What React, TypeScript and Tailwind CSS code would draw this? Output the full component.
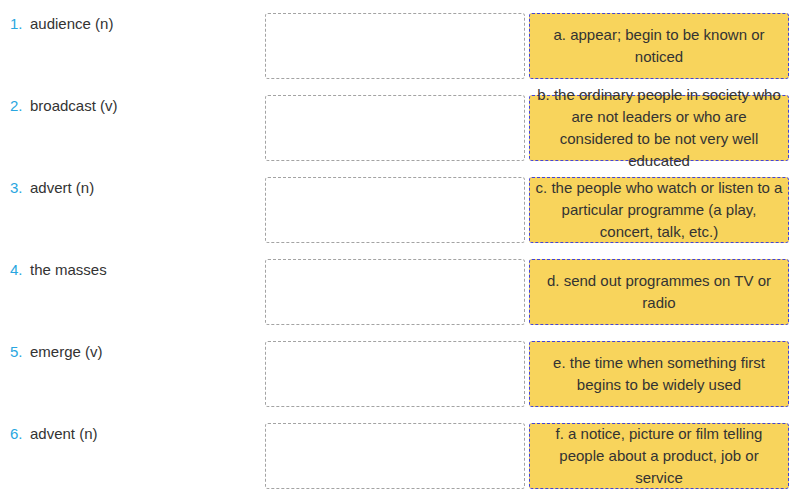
const words = [
  "audience (n)",
  "broadcast (v)",
  "advert (n)",
  "the masses",
  "emerge (v)",
  "advent (n)",
];

const meanings = [
  "a. appear; begin to be known or noticed",
  "b. the ordinary people in society who are not leaders or who are considered to be not very well educated",
  "c. the people who watch or listen to a particular programme (a play, concert, talk, etc.)",
  "d. send out programmes on TV or radio",
  "e. the time when something first begins to be widely used",
  "f. a notice, picture or film telling people about a product, job or service",
];

export default function App() {
  return (
    <div
      className="w-[808px] h-[500px] bg-white pt-[13px] text-[15px] text-[#333]"
      style={{ fontFamily: '"Liberation Sans", Arial, sans-serif' }}
    >
      {words.map((w, i) => (
        <div key={w} className="flex items-start mb-[16px]">
          <div className="w-[265px] pl-[10px] pt-[1px] flex leading-[20px]">
            <span className="w-[20px] text-[#29a6e0]">{i + 1}.</span>
            <span>{w}</span>
          </div>
          <div className="w-[260px] h-[66px] border border-dashed border-[#a3a3a3] rounded-[3px]" />
          <div className="ml-[4px] w-[260px] h-[66px] border border-dashed border-[#4444d8] rounded-[3px] bg-[#f8d45c] flex items-center justify-center px-[4.5px] text-center leading-[22px]">
            <span>{meanings[i]}</span>
          </div>
        </div>
      ))}
    </div>
  );
}
